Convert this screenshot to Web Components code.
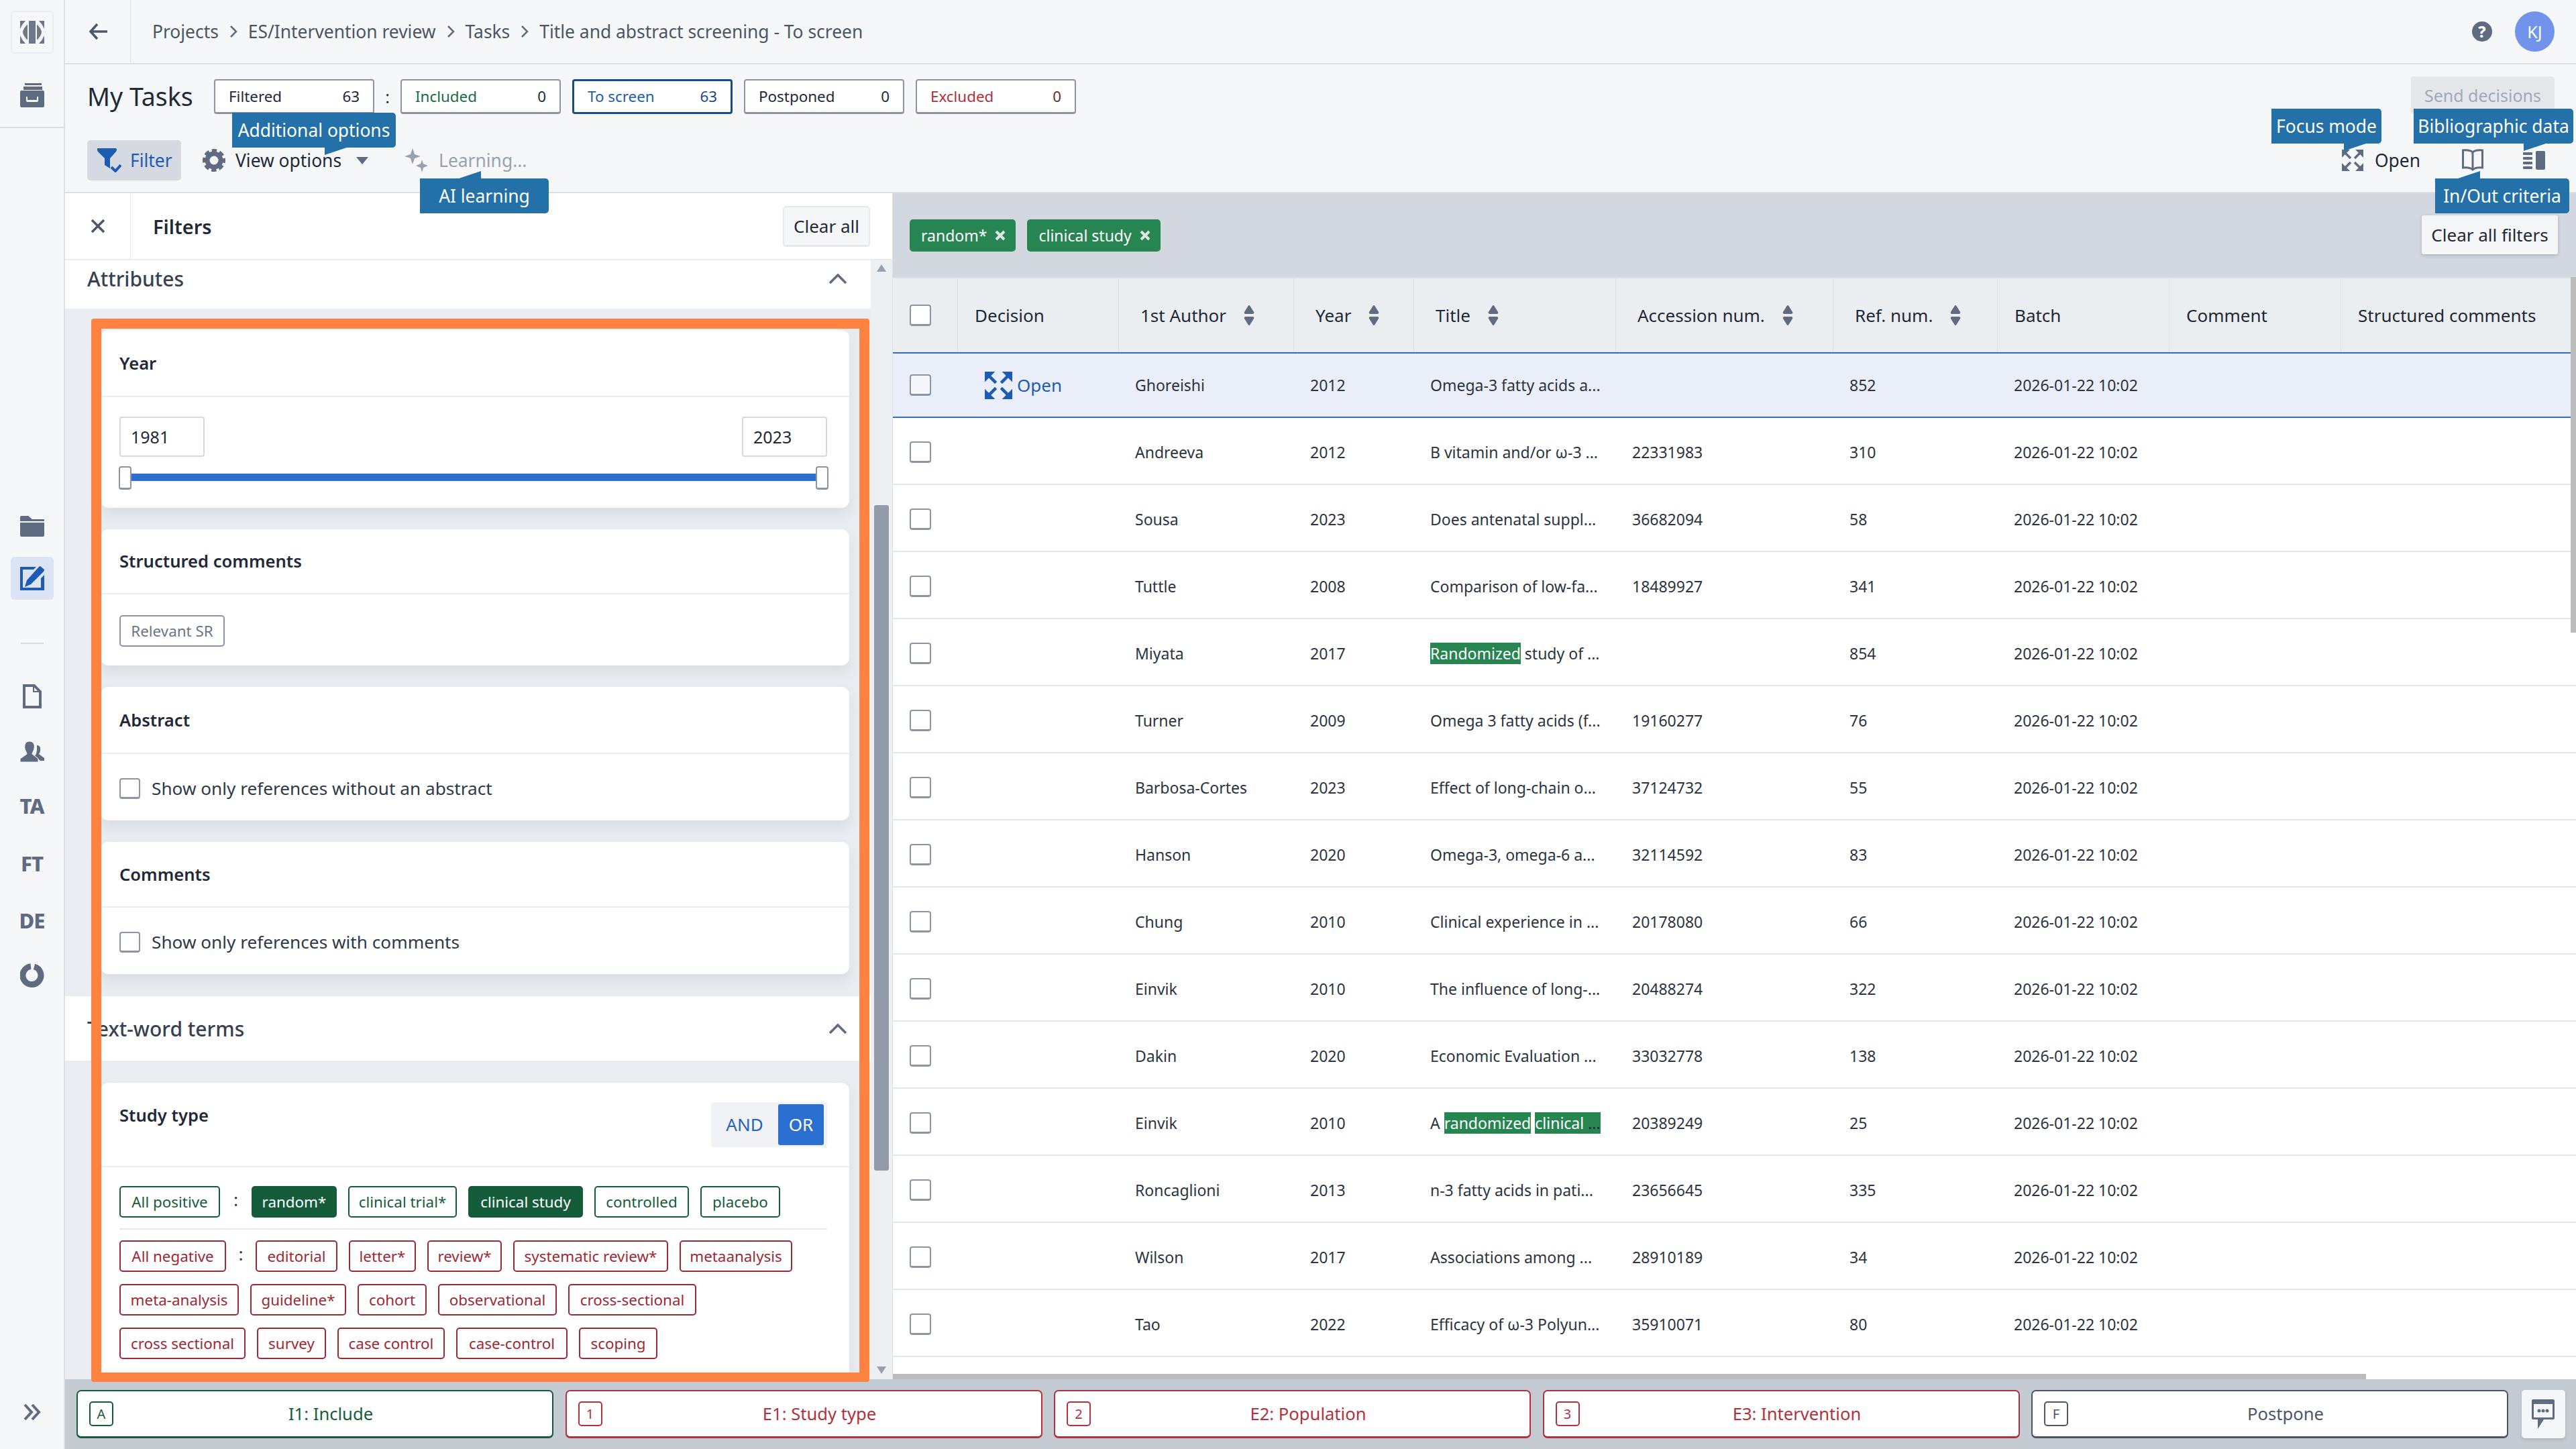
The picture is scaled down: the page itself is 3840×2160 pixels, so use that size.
<!DOCTYPE html>
<html lang="en">
<head>
<meta charset="utf-8">
<title>My Tasks</title>
<style>
  html, body { margin: 0; padding: 0; }
  body { width: 3840px; height: 2160px; overflow: hidden; font-family: "Noto Sans", "Open Sans", sans-serif; color: #1f2937; background: #f5f7f9; }
</style>
</head>
<body>
<rs-app></rs-app>

<script>
'use strict';

(function() {
  // shared icons, all drawn for currentColor
  const icons = {
    logo: '<svg width="36" height="34" viewBox="0 0 36 34" fill="currentColor" opacity=".9"><path d="M0 0H8Q3 5 0 12Z"/><path d="M0 34H8Q3 29 0 22Z"/><path d="M36 0H28Q33 5 36 12Z"/><path d="M36 34H28Q33 29 36 22Z"/><path d="M10 6Q4 13 4 17Q4 21 10 28H11V6Z"/><path d="M26 6Q32 13 32 17Q32 21 26 28H25V6Z"/><path d="M13 0H23V34H13Z"/></svg>',
    archive: '<svg width="36" height="36" viewBox="0 0 36 36" fill="currentColor"><path d="M7 0H32V3H7Z"/><path d="M5 5H33V10H5Z"/><path fill-rule="evenodd" d="M2 11H34Q36 11 36 13V34Q36 36 34 36H2Q0 36 0 34V13Q0 11 2 11ZM9 20V26Q9 28 11 28H25Q27 28 27 26V20H25V25H11V20Z"/></svg>',
    folder: '<svg width="36" height="31" viewBox="0 0 36 31" fill="currentColor"><path d="M0 2Q0 0 2 0H12L18 5H36V8H0Z"/><path d="M0 10H36V29Q36 31 34 31H2Q0 31 0 29Z"/></svg>',
    edit: '<svg width="36" height="36" viewBox="0 0 36 36" fill="currentColor"><path fill-rule="evenodd" d="M0 1H24L20 5H4V32H31V18L36 13V36H0Z"/><path d="M30 0L36 5Q36 7 35 8L16 27L7 31L10 21L28 1Q29 0 30 0Z"/></svg>',
    doc: '<svg width="28" height="36" viewBox="0 0 28 36" fill="none" stroke="currentColor" stroke-width="4"><path d="M2 2H17L26 11V34H2Z"/><path d="M16 2V11H26" stroke-width="2"/></svg>',
    users: '<svg width="36" height="31" viewBox="0 0 36 31" fill="currentColor"><path d="M25 6C29 6 31 9 30 14C30 17 28 18 28 19L36 25V29L30 29L22 22Q25 18 25 13Z"/><path d="M14 0C20 0 22 5 21 11C20 15 18 17 18 19L27 26V31H0V26L10 19C10 17 8 15 7 11C6 5 8 0 14 0Z" stroke="#f5f7f9" stroke-width="1"/></svg>',
    donut: '<svg width="36" height="36" viewBox="0 0 36 36" fill="none" stroke="currentColor" stroke-width="9"><path d="M21 5A13.5 13.5 0 1 1 16 4.600"/></svg>',
    chevrons: '<svg width="28" height="28" viewBox="0 0 28 28" fill="none" stroke="currentColor" stroke-width="4"><path d="M3 3L13 14L3 25"/><path d="M14 3L24 14L14 25"/></svg>',
    back: '<svg width="28" height="26" viewBox="0 0 28 26" fill="none" stroke="currentColor" stroke-width="3.5"><path d="M28 13H4"/><path d="M13 2L3 13L13 24"/></svg>',
    crumb: '<svg width="12" height="20" viewBox="0 0 12 20" fill="none" stroke="currentColor" stroke-width="2.5"><path d="M2 2L10 10L2 18"/></svg>',
    close: '<svg width="22" height="22" viewBox="0 0 22 22" fill="none" stroke="currentColor" stroke-width="3.5"><path d="M2 2L20 20M20 2L2 20"/></svg>',
    chipClose: '<svg width="16" height="16" viewBox="0 0 16 16" fill="none" stroke="currentColor" stroke-width="4"><path d="M2 2L14 14M14 2L2 14"/></svg>',
    chevUp: '<svg width="28" height="16" viewBox="0 0 28 16" fill="none" stroke="currentColor" stroke-width="3.5"><path d="M2 15L14 3L26 15"/></svg>',
    filter: '<svg width="36" height="36" viewBox="0 0 36 36" fill="currentColor"><path d="M0 0H28Q30 2 28 5L19 15V30L11 25V15L1 5Q-1 2 0 0Z"/><path d="M21 28L27 34L35 25" fill="none" stroke="currentColor" stroke-width="4"/></svg>',
    gear: '<svg width="34" height="34" viewBox="0 0 34 34" fill="none" stroke="currentColor"><circle cx="17" cy="17" r="10" stroke-width="7"/><circle cx="17" cy="17" r="14" stroke-width="6" stroke-dasharray="7 4" stroke-dashoffset="3.5"/></svg>',
    sparkle: '<svg width="36" height="36" viewBox="0 0 36 36" fill="currentColor"><path d="M12 0L15 9L24 12L15 15L12 24L9 15L0 12L9 9Z"/><path d="M26 17L28 23L35 26L28 29L26 36L24 29L17 26L24 23Z"/></svg>',
    expand: '<svg width="100%" height="100%" viewBox="0 0 32 32" fill="currentColor" stroke="none"><path d="M0 0H12L0 12Z"/><path d="M32 0H20L32 12Z"/><path d="M0 32H12L0 20Z"/><path d="M32 32H20L32 20Z"/><path d="M5 5L13 13M27 5L19 13M5 27L13 19M27 27L19 19" fill="none" stroke="currentColor" stroke-width="3.500"/></svg>',
    book: '<svg width="32" height="34" viewBox="0 0 32 34" fill="none" stroke="currentColor" stroke-width="3"><path d="M16 5C13 2 7 1.500 1.500 2V28C7 27.500 13 28 16 31C19 28 25 27.500 30.500 28V2C25 1.500 19 2 16 5Z"/><path d="M16 5V31"/></svg>',
    panel: '<svg width="33" height="28" viewBox="0 0 33 28" fill="currentColor"><rect x="19" y="0" width="14" height="28" rx="2"/><rect x="0" y="2" width="14" height="4" rx="1"/><rect x="0" y="9" width="14" height="4" rx="1"/><rect x="0" y="16" width="14" height="4" rx="1"/><rect x="0" y="23" width="14" height="4" rx="1"/></svg>',
    sort: '<svg width="16" height="30" viewBox="0 0 16 30" fill="currentColor"><path d="M8 0Q9 0 10 2L15 10Q16 13 13 13H3Q0 13 1 10L6 2Q7 0 8 0Z"/><path d="M8 30Q9 30 10 28L15 20Q16 17 13 17H3Q0 17 1 20L6 28Q7 30 8 30Z"/></svg>',
    chat: '<svg width="34" height="44" viewBox="0 0 34 44" fill="currentColor"><path fill-rule="evenodd" d="M2 0H32Q34 0 34 2V28Q34 30 32 30H18L9 44V30H2Q0 30 0 28V2Q0 0 2 0ZM3 7V27H31V7Z"/><circle cx="11" cy="17" r="2.500"/><circle cx="17" cy="17" r="2.500"/><circle cx="23" cy="17" r="2.500"/></svg>'
  };

  const rows = [
    ['Ghoreishi', '2012', 'Omega-3 fatty acids a...', '', '852'],
    ['Andreeva', '2012', 'B vitamin and/or ω-3 ...', '22331983', '310'],
    ['Sousa', '2023', 'Does antenatal suppl...', '36682094', '58'],
    ['Tuttle', '2008', 'Comparison of low-fa...', '18489927', '341'],
    ['Miyata', '2017', '<mark>Randomized</mark> study of ...', '', '854'],
    ['Turner', '2009', 'Omega 3 fatty acids (f...', '19160277', '76'],
    ['Barbosa-Cortes', '2023', 'Effect of long-chain o...', '37124732', '55'],
    ['Hanson', '2020', 'Omega-3, omega-6 a...', '32114592', '83'],
    ['Chung', '2010', 'Clinical experience in ...', '20178080', '66'],
    ['Einvik', '2010', 'The influence of long-...', '20488274', '322'],
    ['Dakin', '2020', 'Economic Evaluation ...', '33032778', '138'],
    ['Einvik', '2010', 'A <mark>randomized</mark> <mark>clinical <i>...</i></mark>', '20389249', '25'],
    ['Roncaglioni', '2013', 'n-3 fatty acids in pati...', '23656645', '335'],
    ['Wilson', '2017', 'Associations among ...', '28910189', '34'],
    ['Tao', '2022', 'Efficacy of ω-3 Polyun...', '35910071', '80']
  ]

  // every element gets its own shadow root, markup and styles
  class Base extends HTMLElement {
    constructor() {
      super()
      this.attachShadow({ mode: 'open' })
    }

    render(css, html) {
      this.shadowRoot.innerHTML = `<style>${css}</style>${html}`
    }
  }

  class RsTip extends Base {
    connectedCallback() {
      const dir = this.getAttribute('dir-tip')
      const arrow = this.getAttribute('arrow')
      const poly = dir === 'down' ? 'polygon(0 0, 100% 0, 0 100%)' : 'polygon(100% 0, 100% 100%, 0 100%)'
      const place = dir === 'down' ? 'top: 100%' : 'bottom: 100%'
      this.render(`
        :host {
          position: absolute; height: 52px; background: #2470a8; color: #fff; z-index: 5;
          display: flex; align-items: center; justify-content: center;
          font-size: 26.4px; border-radius: 0 5px 5px 0; white-space: nowrap;
        }
        i { position: absolute; ${place}; left: ${arrow}px; width: 33px; height: 11px; background: #2470a8; clip-path: ${poly}; }
      `, `<slot></slot><i></i>`)
    }
  }

  class RsSideItem extends Base {
    connectedCallback() {
      const active = this.hasAttribute('active')
      this.render(`
        :host {
          display: flex; width: 64px; height: 64px; margin: 0 auto; align-items: center; justify-content: center;
          color: ${active ? '#1e5cb3' : '#5f6b80'}; border-radius: 6px; box-sizing: border-box;
          background: ${active ? '#dae4f5' : 'none'};
          font-weight: 800; font-size: 31px; letter-spacing: -1px;
        }
        :host([logo]) { border: 2px solid #e9ecf0; }
      `, `<slot></slot>`)
    }
  }

  class RsSidebar extends Base {
    connectedCallback() {
      const ic = icons
      this.render(`
        :host { display: flex; flex-direction: column; width: 97px; height: 2160px; box-sizing: border-box; border-right: 2px solid #dde1e7; background: #f5f7f9; padding-top: 16px; }
        rs-side-item { flex: none; }
        hr { border: 0; height: 2px; background: #d9dde3; margin: 0; }
        .top { width: 97px; }
        .short { width: 34px; margin: 64px auto 0; }
      `, `
        <rs-side-item logo>${ic.logo}</rs-side-item>
        <rs-side-item style="margin-top:30px">${ic.archive}</rs-side-item>
        <hr class="top" style="margin-top:15px">
        <rs-side-item style="margin-top:561px">${ic.folder}</rs-side-item>
        <rs-side-item active style="margin-top:14px">${ic.edit}</rs-side-item>
        <hr class="short">
        <rs-side-item style="margin-top:46px">${ic.doc}</rs-side-item>
        <rs-side-item style="margin-top:18px">${ic.users}</rs-side-item>
        <rs-side-item style="margin-top:17px">TA</rs-side-item>
        <rs-side-item style="margin-top:22px">FT</rs-side-item>
        <rs-side-item style="margin-top:21px">DE</rs-side-item>
        <rs-side-item style="margin-top:18px">${ic.donut}</rs-side-item>
        <rs-side-item style="margin-top:587px">${ic.chevrons}</rs-side-item>
      `)
    }
  }

  class RsHeader extends Base {
    connectedCallback() {
      const sep = `<span class="sep">${icons.crumb}</span>`
      this.render(`
        :host { display: flex; height: 96px; box-sizing: border-box; border-bottom: 2px solid #dde1e7; align-items: center; color: #4b5563; font-size: 26.4px; }
        .back { width: 98px; height: 94px; border-right: 1px solid #dde1e7; display: flex; align-items: center; justify-content: center; color: #4b5668; box-sizing: border-box; }
        nav { display: flex; align-items: center; margin-left: 32px; gap: 16px; flex: 1; }
        .sep { display: flex; color: #5f6b80; }
        .help { width: 30px; height: 30px; border-radius: 50%; background: #5f6b80; color: #fff; font-size: 23px; font-weight: 800; display: flex; align-items: center; justify-content: center; margin-right: 34px; }
        .me { width: 59px; height: 60px; border-radius: 50%; background: #7193ec; color: #fff; display: flex; align-items: center; justify-content: center; margin-right: 32px; font-size: 25px; }
      `, `
        <div class="back">${icons.back}</div>
        <nav><span>Projects</span>${sep}<span>ES/Intervention review</span>${sep}<span>Tasks</span>${sep}<span>Title and abstract screening - To screen</span></nav>
        <div class="help">?</div>
        <div class="me">KJ</div>
      `)
    }
  }

  class RsPill extends Base {
    connectedCallback() {
      const kind = this.getAttribute('kind') || ''
      const colors = { inc: '#1a6b45', out: '#b3303c', on: '#1e5cb3' }
      this.render(`
        :host {
          display: flex; width: 239px; height: 52px; box-sizing: border-box; align-items: center; justify-content: space-between;
          padding: 0 20px; background: #fff; font-size: 22.4px; border-radius: 4px; margin-top: 3px;
          border: 2px solid #8d95a3; border-bottom-width: 3px; color: #1f2937;
        }
        :host([kind="on"]) { border: 3px solid #1c4a8f; }
        span { color: ${colors[kind] || '#1f2937'}; }
        b { font-weight: 400; color: ${kind === 'on' ? '#1c4a8f' : kind === 'out' ? '#6b2a30' : '#1f2937'}; }
      `, `<span><slot></slot></span><b>${this.getAttribute('n')}</b>`)
    }
  }

  class RsTaskbar extends Base {
    connectedCallback() {
      this.render(`
        :host { display: flex; flex-direction: column; height: 192px; box-sizing: border-box; padding: 18px 32px 0 33px; border-bottom: 2px solid #dde1e7; background: #f5f7f9; }
        .one, .two { display: flex; align-items: center; }
        .one { height: 56px; }
        .two { height: 60px; margin-top: 39px; font-size: 26.4px; }
        h1 { font-size: 37.500px; font-weight: 400; margin: 3px 0 0; width: 189px; flex: none; white-space: nowrap; color: #1f2937; }
        .colon { width: 39px; text-align: center; font-size: 25px; margin-top: 3px; }
        rs-pill + rs-pill { margin-left: 17px; }
        .send { margin-left: auto; width: 214px; height: 56px; background: #e5e7eb; color: #a3a9b4; display: flex; align-items: center; justify-content: center; font-size: 25px; border-radius: 4px; }
        .filter { display: flex; align-items: center; gap: 13px; width: 140px; height: 60px; background: #d5d9e2; border-radius: 5px; color: #1e5cb3; box-sizing: border-box; padding-left: 15px; }
        .opt { display: flex; align-items: center; margin-left: 32px; color: #1f2937; }
        .opt svg { color: #5f6b80; margin-right: 15px; }
        .caret { width: 0; height: 0; border: 9px solid transparent; border-top: 11px solid #5f6b80; border-bottom: 0; margin-left: 22px; }
        .learn { display: flex; align-items: center; margin-left: 54px; color: #9aa1ae; }
        .learn svg { margin-right: 15px; }
        .rt { margin-left: auto; display: flex; align-items: center; color: #1f2937; }
        .rt svg { color: #5f6b80; }
        .exp { width: 32px; height: 32px; color: #5f6b80; margin-right: 17px; }
      `, `
        <div class="one">
          <h1>My Tasks</h1>
          <rs-pill n="63">Filtered</rs-pill>
          <span class="colon">:</span>
          <rs-pill n="0" kind="inc">Included</rs-pill>
          <rs-pill n="63" kind="on">To screen</rs-pill>
          <rs-pill n="0">Postponed</rs-pill>
          <rs-pill n="0" kind="out">Excluded</rs-pill>
          <div class="send">Send decisions</div>
        </div>
        <div class="two">
          <div class="filter">${icons.filter}<span>Filter</span></div>
          <div class="opt">${icons.gear}<span>View options</span><i class="caret"></i></div>
          <div class="learn">${icons.sparkle}<span>Learning...</span></div>
          <div class="rt">
            <div class="exp">${icons.expand}</div><span>Open</span>
            <span style="display:flex;margin-left:62px">${icons.book}</span>
            <span style="display:flex;margin-left:59px;margin-right:14px">${icons.panel}</span>
          </div>
        </div>
      `)
    }
  }

  class RsCard extends Base {
    connectedCallback() {
      this.render(`
        :host { display: block; background: #fff; border-radius: 12px; box-shadow: 0 10px 18px rgba(110, 120, 140, .12); margin: 0 32px 32px 53px; }
        header { height: var(--head, 100px); box-sizing: border-box; padding: 0 33px 0 28px; display: flex; align-items: center; justify-content: space-between; border-bottom: 2px solid #e9ecf0; font-weight: 600; font-size: 25.6px; }
        header span { padding-bottom: var(--shift, 0); }
        main { padding: var(--pad, 28px); font-size: 25px; }
      `, `<header><span>${this.getAttribute('heading')}</span><slot name="side"></slot></header><main><slot></slot></main>`)
    }
  }

  class RsCheck extends Base {
    connectedCallback() {
      this.render(`
        :host { display: flex; align-items: center; gap: 17px; font-size: 26.2px; color: #2f3947; }
        i { width: 31px; height: 31px; box-sizing: border-box; flex: none; background: #fff; border: 2px solid #8d95a3; border-bottom-width: 3px; border-radius: 4px; }
      `, `<i></i><slot></slot>`)
    }
  }

  class RsTag extends Base {
    connectedCallback() {
      this.render(`
        :host { display: inline-flex; height: 47px; box-sizing: border-box; align-items: center; justify-content: center; font-size: 22.4px; background: #fff; border-radius: 5px; white-space: nowrap; border: 2px solid; }
        :host([tone="pos"]) { color: #155d3a; border-color: #155d3a; }
        :host([tone="on"]) { color: #fff; background: #155d3a; border-color: #155d3a; }
        :host([tone="neg"]) { color: #9c2a35; border-color: #9c2a35; }
        :host([tone="mute"]) { color: #6b7585; border-color: #8a94a6; }
      `, `<slot></slot>`)
    }
  }

  class RsFilters extends Base {
    connectedCallback() {
      const tag = (text, w, tone) => `<rs-tag tone="${tone}" style="width:${w}px">${text}</rs-tag>`
      this.render(`
        :host { display: flex; flex-direction: column; width: 1234px; flex: none; background: #fff; border-right: 1px solid #dde1e7; box-sizing: border-box; position: relative; }
        .head { display: flex; height: 100px; flex: none; align-items: center; border-bottom: 2px solid #e9ecf0; box-sizing: border-box; }
        .x { width: 98px; height: 98px; border-right: 1px solid #e5e8ec; display: flex; align-items: center; justify-content: center; box-sizing: border-box; color: #4b5668; }
        .head b { flex: 1; margin-left: 33px; font-weight: 600; font-size: 29px; }
        .clear { width: 130px; height: 61px; margin-right: 33px; background: #f5f6f8; border: 2px solid #e5e8ec; border-bottom-width: 3px; border-radius: 5px; display: flex; align-items: center; justify-content: center; font-size: 26px; box-sizing: border-box; }
        .body { display: flex; flex: 1; min-height: 0; }
        .scroll { flex: 1; min-width: 0; overflow: hidden; background: #e9ecf0; }
        .bar { display: flex; align-items: center; justify-content: space-between; background: #fff; font-size: 30px; font-weight: 500; padding: 0 35px 0 33px; color: #374151; box-sizing: border-box; }
        .bar svg { color: #5f6b80; }
        .track { width: 32px; flex: none; background: #ecf0f3; position: relative; }
        .track::before { content: ""; position: absolute; left: 5px; right: 5px; top: 365px; height: 992px; background: #939baa; border-radius: 3px; }
        .up, .down { position: absolute; left: 9px; width: 0; height: 0; border: 7px solid transparent; }
        .up { top: 6px; border-bottom: 11px solid #9aa1ae; border-top: 0; }
        .down { bottom: 8px; border-top: 11px solid #9aa1ae; border-bottom: 0; }
        .nums { display: flex; justify-content: space-between; margin-top: 1px; }
        .num { width: 127px; height: 60px; box-sizing: border-box; border: 2px solid #d5d9e0; border-radius: 4px; display: flex; align-items: center; padding-left: 15px; font-size: 25px; }
        .slide { position: relative; height: 11px; margin: 25px 0 0 16px; background: #2b6fd1; }
        .slide i { position: absolute; top: -11px; width: 19px; height: 35px; box-sizing: border-box; background: #fff; border: 2px solid #8d95a3; border-bottom-width: 3px; border-radius: 4px; }
        .slide i:first-child { left: -17px; }
        .slide i:last-child { right: -2px; }
        .andor { display: flex; align-items: center; width: 173px; height: 67px; box-sizing: border-box; background: #f0f2f5; border-radius: 4px; padding: 3px 5px 3px 0; font-weight: 400; font-size: 26px; color: #2563b5; }
        .andor span { flex: 1; text-align: center; }
        .andor b { width: 68px; height: 61px; background: #2b6fd1; color: #fff; font-weight: 400; border-radius: 3px; display: flex; align-items: center; justify-content: center; }
        .tags { display: flex; flex-wrap: wrap; gap: 18px 17px; align-items: center; }
        .tags em { font-style: normal; width: 13px; text-align: center; font-size: 25px; color: #1f2937; margin: -8px 0 0 0; }
        .tags em.neg { width: 10px; }
        .rule { height: 2px; background: #e5e8ec; margin: 16px 0; }
      `, `
        <div class="head"><div class="x">${icons.close}</div><b>Filters</b><div class="clear">Clear all</div></div>
        <div class="body">
          <div class="scroll">
            <div class="bar" style="height:72px;margin-bottom:32px;padding-bottom:18px">Attributes${icons.chevUp}</div>
            <rs-card heading="Year" style="--pad:28px 33px 26px 28px;height:265px">
              <div class="nums"><div class="num">1981</div><div class="num">2023</div></div>
              <div class="slide"><i></i><i></i></div>
            </rs-card>
            <rs-card heading="Structured comments" style="--head:97px;--pad:31px 28px 28px;height:203px">
              ${tag('Relevant SR', 157, 'mute')}
            </rs-card>
            <rs-card heading="Abstract" style="--pad:33px 28px;height:199px">
              <rs-check>Show only references without an abstract</rs-check>
            </rs-card>
            <rs-card heading="Comments" style="--head:98px;--pad:33px 28px;height:197px">
              <rs-check>Show only references with comments</rs-check>
            </rs-card>
            <div class="bar" style="height:96px;margin:33px 0">Text-word terms${icons.chevUp}</div>
            <rs-card heading="Study type" style="--head:126px;--shift:27px;--pad:28px 33px 28px 28px">
              <div slot="side" class="andor"><span>AND</span><b>OR</b></div>
              <div class="tags">
                ${tag('All positive', 150, 'pos')}<em>:</em>
                ${tag('random*', 127, 'on')}${tag('clinical trial*', 162, 'pos')}${tag('clinical study', 171, 'on')}${tag('controlled', 141, 'pos')}${tag('placebo', 119, 'pos')}
              </div>
              <div class="rule"></div>
              <div class="tags">
                ${tag('All negative', 159, 'neg')}<em class="neg">:</em>
                ${tag('editorial', 122, 'neg')}${tag('letter*', 100, 'neg')}${tag('review*', 111, 'neg')}${tag('systematic review*', 231, 'neg')}${tag('metaanalysis', 168, 'neg')}
                ${tag('meta-analysis', 178, 'neg')}${tag('guideline*', 143, 'neg')}${tag('cohort', 103, 'neg')}${tag('observational', 177, 'neg')}${tag('cross-sectional', 191, 'neg')}
                ${tag('cross sectional', 188, 'neg')}${tag('survey', 103, 'neg')}${tag('case control', 160, 'neg')}${tag('case-control', 166, 'neg')}${tag('scoping', 117, 'neg')}
              </div>
            </rs-card>
          </div>
          <div class="track"><i class="up"></i><i class="down"></i></div>
        </div>
      `)
    }
  }

  class RsChip extends Base {
    connectedCallback() {
      this.render(`
        :host { display: inline-flex; align-items: center; height: 48px; box-sizing: border-box; padding: 0 15px 0 17px; gap: 12px; background: #278552; color: #fff; border-radius: 5px; font-size: 23px; white-space: nowrap; }
        svg { width: 16px; height: 16px; color: #dfe9e3; }
      `, `<slot></slot>${icons.chipClose}`)
    }
  }

  class RsTable extends Base {
    connectedCallback() {
      const grid = 'display: grid; grid-template-columns: 96px 240px 261px 179px 301px 324px 245px 256px 256px 342px;'
      const head = [
        ['Decision'], ['1st Author', 1], ['Year', 1], ['Title', 1], ['Accession num.', 1], ['Ref. num.', 1], ['Batch'], ['Comment'], ['Structured comments']
      ]
      const body = rows.map((r, i) => `
        <div class="row${i === 0 ? ' sel' : ''}">
          <div class="c"><i class="box"></i></div>
          <div class="t">${i === 0 ? `<span class="open"><span class="exp">${icons.expand}</span>Open</span>` : ''}</div>
          <div class="t"><span>${r[0]}</span></div><div class="t"><span>${r[1]}</span></div><div class="t"><span>${r[2]}</span></div><div class="t"><span>${r[3]}</span></div><div class="t"><span>${r[4]}</span></div>
          <div class="t"><span>2026-01-22 10:02</span></div><div class="t"></div><div class="t"></div>
        </div>`).join('')
      this.render(`
        :host { display: block; flex: 1; min-height: 0; position: relative; background: #fff; overflow: hidden; }
        .head { ${grid} height: 112px; background: #ebeef1; border-top: 2px solid #dde1e7; box-sizing: border-box; }
        .head > div { display: flex; align-items: center; gap: 26px; border-left: 1px solid #dde1e7; font-size: 26px; padding-left: 25px; color: #1f2937; white-space: nowrap; box-sizing: border-box; }
        .head > div.s { padding-left: 32px; }
        .head > div:first-child { border-left: 0; }
        .head svg { color: #5f6b80; }
        .row { ${grid} height: 100px; border-bottom: 2px solid #e5e8ec; box-sizing: border-box; font-size: 23px; color: #2b3440; }
        .row.sel { height: 98px; background: #eaeef9; border-top: 2px solid #2b6fd1; border-bottom: 2px solid #2b6fd1; }
        .c { display: flex; align-items: center; padding: 3px 0 0 25px; }
        .t { display: flex; align-items: center; padding: 3px 0 0 25px; white-space: pre; min-width: 0; overflow: hidden; }
        .sel .c, .sel .t { padding-top: 0; }
        .head .c { padding-top: 0; }
        .box { width: 32px; height: 32px; box-sizing: border-box; background: #fff; border: 2px solid #8d95a3; border-bottom-width: 3px; border-radius: 4px; }
        .sel .box { background: #f5f7fb; }
        mark { background: #278552; color: #fff; height: 32px; line-height: 32px; display: inline-block; }
        mark i { font-style: normal; color: #1f2937; }
        .open { display: flex; align-items: center; gap: 7px; color: #1e5cb3; font-size: 26px; margin: 0 0 0 16px; }
        .exp { width: 41px; height: 41px; display: block; }
        .vbar { position: absolute; right: 0; top: 0; width: 8px; height: 530px; background: #bcbcbc; }
        .hbar { position: absolute; left: 0; bottom: 0; width: 2196px; height: 8px; background: #bcbcbc; }
      `, `
        <div class="head">
          <div class="c"><i class="box"></i></div>
          ${head.map(h => `<div class="${h[1] ? 's' : ''}"><span>${h[0]}</span>${h[1] ? icons.sort : ''}</div>`).join('')}
        </div>
        ${body}
        <div class="vbar"></div><div class="hbar"></div>
      `)
    }
  }

  class RsResults extends Base {
    connectedCallback() {
      this.render(`
        :host { display: flex; flex-direction: column; flex: 1; min-width: 0; }
        .chips { flex: none; height: 125px; background: #d3d7df; display: flex; align-items: center; gap: 17px; padding-left: 25px; box-sizing: border-box; position: relative; }
        .all { position: absolute; left: 2279px; top: 33px; width: 203px; height: 58px; background: #f5f6f8; box-shadow: 0 2px 5px rgba(90, 100, 120, .3); border-radius: 3px; display: flex; align-items: center; justify-content: center; font-size: 26px; }
      `, `
        <div class="chips"><rs-chip>random*</rs-chip><rs-chip>clinical study</rs-chip><div class="all">Clear all filters</div></div>
        <rs-table></rs-table>
      `)
    }
  }

  class RsDecision extends Base {
    connectedCallback() {
      const tone = this.getAttribute('tone')
      const c = { pos: '#155d3a', neg: '#b3303c', neu: '#4b5668' }[tone]
      this.render(`
        :host { display: flex; align-items: center; width: 711px; height: 72px; box-sizing: border-box; background: #fff; border: 2px solid ${c}; border-bottom-width: 3px; border-radius: 7px; padding-left: 17px; color: ${c}; font-size: 25.6px; }
        kbd { width: 36px; height: 37px; box-sizing: border-box; border: 2px solid ${c}; border-radius: 5px; display: flex; align-items: center; justify-content: center; font: inherit; font-size: 20px; flex: none; }
        span { flex: 1; text-align: center; padding-right: 6px; }
      `, `<kbd>${this.getAttribute('key-hint')}</kbd><span><slot></slot></span>`)
    }
  }

  class RsDecisions extends Base {
    connectedCallback() {
      this.render(`
        :host { display: flex; flex: none; height: 104px; box-sizing: border-box; align-items: center; gap: 17.5px; padding: 0 0 0 17px; background: #c4cbd3; }
        .note { width: 65px; height: 72px; background: #f5f6f8; border-radius: 5px; box-shadow: 0 2px 4px rgba(90, 100, 120, .25); margin-left: 2px; display: flex; align-items: center; justify-content: center; color: #5f6b80; }
      `, `
        <rs-decision tone="pos" key-hint="A">I1: Include</rs-decision>
        <rs-decision tone="neg" key-hint="1">E1: Study type</rs-decision>
        <rs-decision tone="neg" key-hint="2">E2: Population</rs-decision>
        <rs-decision tone="neg" key-hint="3">E3: Intervention</rs-decision>
        <rs-decision tone="neu" key-hint="F">Postpone</rs-decision>
        <div class="note">${icons.chat}</div>
      `)
    }
  }

  class RsApp extends Base {
    connectedCallback() {
      this.render(`
        :host { display: flex; width: 3840px; height: 2160px; position: relative; overflow: hidden; }
        .main { display: flex; flex-direction: column; flex: 1; min-width: 0; }
        .work { display: flex; flex: 1; min-height: 0; }
        .mark { position: absolute; left: 136px; top: 475px; width: 1160px; height: 1585px; box-sizing: border-box; border: 15px solid #ff8340; border-bottom-width: 14px; border-radius: 4px; z-index: 4; }
      `, `
        <rs-sidebar></rs-sidebar>
        <div class="main">
          <rs-header></rs-header>
          <rs-taskbar></rs-taskbar>
          <div class="work"><rs-filters></rs-filters><rs-results></rs-results></div>
          <rs-decisions></rs-decisions>
        </div>
        <div class="mark"></div>
        <rs-tip dir-tip="down" arrow="138" style="left:346px;top:168px;width:244px">Additional options</rs-tip>
        <rs-tip dir-tip="up" arrow="58" style="left:626px;top:266px;width:192px">AI learning</rs-tip>
        <rs-tip dir-tip="down" arrow="108" style="left:3386px;top:162px;width:164px">Focus mode</rs-tip>
        <rs-tip dir-tip="down" arrow="164" style="left:3598px;top:162px;width:238px">Bibliographic data</rs-tip>
        <rs-tip dir-tip="up" arrow="34" style="left:3630px;top:266px;width:200px">In/Out criteria</rs-tip>
      `)
    }
  }

  customElements.define('rs-tip', RsTip)
  customElements.define('rs-side-item', RsSideItem)
  customElements.define('rs-sidebar', RsSidebar)
  customElements.define('rs-header', RsHeader)
  customElements.define('rs-pill', RsPill)
  customElements.define('rs-taskbar', RsTaskbar)
  customElements.define('rs-card', RsCard)
  customElements.define('rs-check', RsCheck)
  customElements.define('rs-tag', RsTag)
  customElements.define('rs-filters', RsFilters)
  customElements.define('rs-chip', RsChip)
  customElements.define('rs-table', RsTable)
  customElements.define('rs-results', RsResults)
  customElements.define('rs-decision', RsDecision)
  customElements.define('rs-decisions', RsDecisions)
  customElements.define('rs-app', RsApp)
})()
</script>
</body>
</html>
